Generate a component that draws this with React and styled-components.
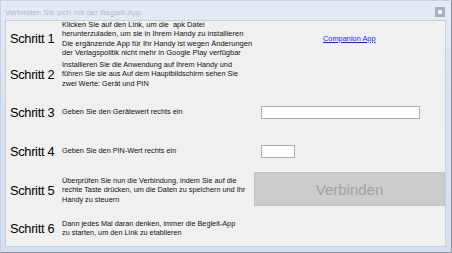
import React from "react";
import styled, { createGlobalStyle } from "styled-components";

const GlobalStyle = createGlobalStyle`
  html, body {
    margin: 0;
    padding: 0;
    background: #ffffff;
  }
  body {
    font-family: "Liberation Sans", Arial, sans-serif;
  }
`;

const Window = styled.div({
  width: "452px",
  height: "253px",
  boxSizing: "border-box",
  display: "flex",
  flexDirection: "column",
  background: "linear-gradient(180deg, #e3ebf5 0%, #d7e3f0 40%, #d3dfed 100%)",
  borderTop: "1px solid #c9d3df",
  borderLeft: "1px solid #c9d3df",
  borderRight: "1px solid #8f969f",
  borderBottom: "1px solid #8f969f",
});

const TitleBar = styled.div({
  height: "19px",
  display: "flex",
  alignItems: "center",
  justifyContent: "space-between",
  padding: "0 6px 0 4px",
});

const Title = styled.span({
  fontFamily: '"Liberation Sans", Arial, sans-serif',
  fontSize: "8px",
  color: "#b3bdc9",
  marginTop: "4px",
});

const CloseButton = styled.div({
  width: "10px",
  height: "10px",
  background: "#a9b0ba",
  display: "flex",
  alignItems: "center",
  justifyContent: "center",
  marginTop: "2px",
  "> span": {
    width: "4px",
    height: "4px",
    background: "#eef0f3",
  },
});

const Client = styled.div({
  flex: 1,
  margin: "0 5px 5px 4px",
  border: "1px solid #c5d1df",
  background: "#f0f0f0",
  display: "grid",
  gridTemplateColumns: "52px 192px 1fr",
  gridTemplateRows: "35px 36px 40px 38px 40px 36px",
  alignItems: "center",
  paddingLeft: "4px",
});

const StepLabel = styled.div({
  fontSize: "12.8px",
  letterSpacing: "-0.3px",
  color: "#000000",
  whiteSpace: "nowrap",
});

const StepText = styled.div(({ $size }) => ({
  fontSize: `${$size || 7.3}px`,
  lineHeight: "9.5px",
  color: "#111111",
  whiteSpace: "pre",
}));

const Control = styled.div(({ $indent }) => ({
  display: "flex",
  alignItems: "center",
  paddingLeft: `${$indent || 0}px`,
}));

const Link = styled.a({
  fontSize: "7.4px",
  color: "#1a1aff",
  textDecoration: "underline",
  cursor: "pointer",
});

const TextInput = styled.input(({ $width }) => ({
  width: `${$width}px`,
  height: "13px",
  boxSizing: "border-box",
  border: "1px solid #abadb3",
  background: "#ffffff",
  padding: 0,
  margin: 0,
  outline: "none",
}));

const ConnectButton = styled.button({
  width: "191px",
  height: "34px",
  boxSizing: "border-box",
  border: "1px solid #c3c3c3",
  background: "#cccccc",
  color: "#a2a2a2",
  fontFamily: '"Liberation Sans", Arial, sans-serif',
  fontSize: "15px",
  padding: 0,
  marginTop: "-2px",
});

const steps = [
  {
    label: "Schritt 1",
    size: 7.5,
    text: "Klicken Sie auf den Link, um die  apk Datei\nherunterzuladen, um sie in Ihrem Handy zu installieren\nDie ergänzende App für Ihr Handy ist wegen Änderungen\nder Verlagspolitik nicht mehr in Google Play verfügbar",
    control: (
      <Control $indent={69}>
        <Link>Companion App</Link>
      </Control>
    ),
  },
  {
    label: "Schritt 2",
    text: "Installieren Sie die Anwendung auf Ihrem Handy und\nführen Sie sie aus Auf dem Hauptbildschirm sehen Sie\nzwei Werte: Gerät und PIN",
    control: <Control />,
  },
  {
    label: "Schritt 3",
    text: "Geben Sie den Gerätewert rechts ein",
    control: (
      <Control $indent={7}>
        <TextInput $width={159} />
      </Control>
    ),
  },
  {
    label: "Schritt 4",
    text: "Geben Sie den PIN-Wert rechts ein",
    control: (
      <Control $indent={7}>
        <TextInput $width={34} />
      </Control>
    ),
  },
  {
    label: "Schritt 5",
    text: "Überprüfen Sie nun die Verbindung, indem Sie auf die\nrechte Taste drücken, um die Daten zu speichern und Ihr\nHandy zu steuern",
    control: (
      <Control>
        <ConnectButton disabled>Verbinden</ConnectButton>
      </Control>
    ),
  },
  {
    label: "Schritt 6",
    text: "Dann jedes Mal daran denken, immer die Begleit-App\nzu starten, um den Link zu etablieren",
    control: <Control />,
  },
];

const App = () => {
  return (
    <>
      <GlobalStyle />
      <Window>
        <TitleBar>
          <Title>Verbinden Sie sich mit der Begleit-App</Title>
          <CloseButton>
            <span />
          </CloseButton>
        </TitleBar>
        <Client>
          {steps.map((step) => (
            <React.Fragment key={step.label}>
              <StepLabel>{step.label}</StepLabel>
              <StepText $size={step.size}>{step.text}</StepText>
              {step.control}
            </React.Fragment>
          ))}
        </Client>
      </Window>
    </>
  );
};

export default App;
